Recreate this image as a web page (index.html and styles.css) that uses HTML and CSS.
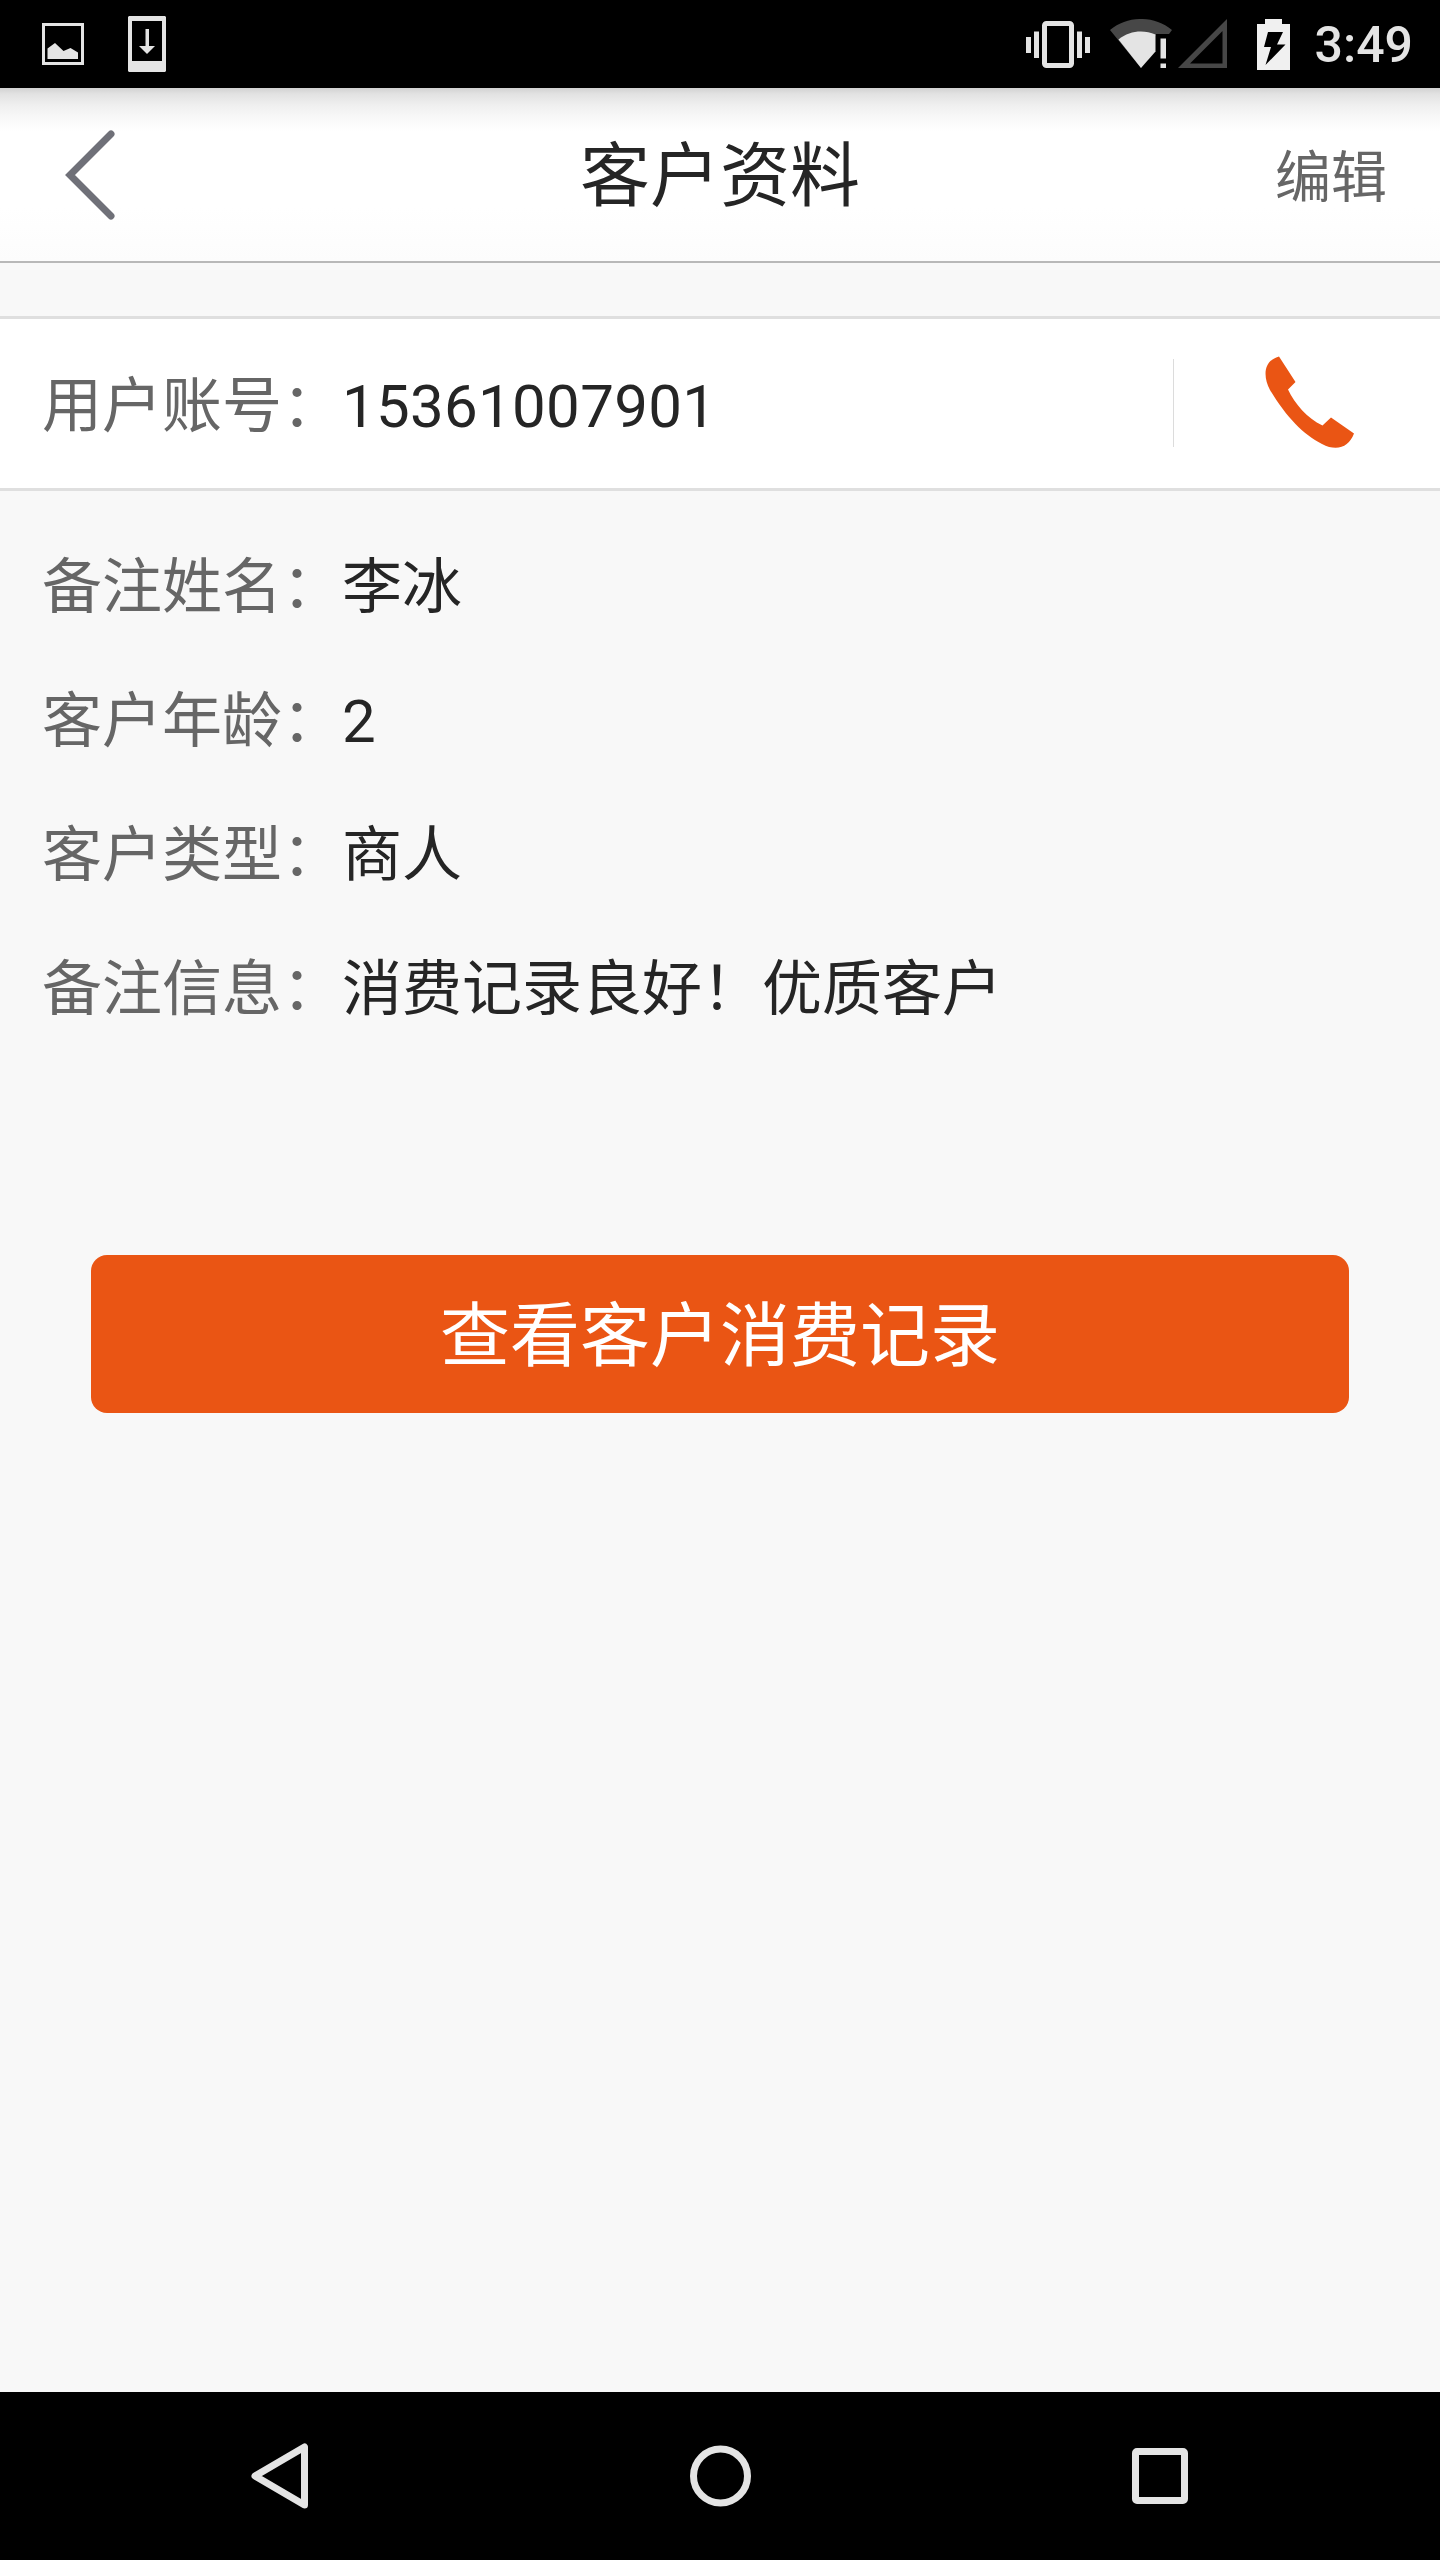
FILE: index.html
```html
<!DOCTYPE html>
<html lang="zh-CN">
<head>
    <meta charset="UTF-8">
    <meta name="viewport" content="width=device-width, initial-scale=1.0">
    <title>客户资料</title>
    <link rel="stylesheet" href="styles.css">
</head>
<body>
    <div class="status-bar">
        <div class="status-left">
            <svg width="42" height="42" viewBox="0 0 42 42">
                <path d="M1.5 1.5h39v39h-39z" fill="none" stroke="#e4e4e4" stroke-width="3"/>
                <path d="M5.500 36V25.500l7.500-5.500 8.500 8 7-3 7.500 4.500V36z" fill="#e4e4e4"/>
            </svg>
            <svg width="38" height="56" viewBox="0 0 38 56">
                <path fill-rule="evenodd" d="M1 0h36l1 1v54l-1 1H1l-1-1V1zM4 5v40h30V5z" fill="#e4e4e4"/>
                <path d="M17.500 13h3.500v17h6l-8 8-8-8h6.500z" fill="#e4e4e4"/>
            </svg>
        </div>
        <div class="status-right">
            <svg class="vibrate" width="64" height="48" viewBox="0 0 64 48">
                <rect x="18.500" y="2.500" width="27" height="42" rx="2" fill="none" stroke="#e4e4e4" stroke-width="5"/>
                <path d="M0 16h5v16H0zM8 10.500h5v26.500H8zM51 10.500h5v26.500h-5zM59 16h5v16h-5z" fill="#e4e4e4"/>
            </svg>
            <svg class="wifi" width="62" height="50" viewBox="0 0 62 50">
                <path d="M0 11C18-3.700 44-3.700 62 11l-3 4H46L31 49z" fill="#474747"/>
                <path d="M8.500 20.500c11-9 25-10 37-5v17L31 49z" fill="#e4e4e4"/>
                <path d="M50.500 19.500h5.500v20h-5.500zM50.500 44.500h5.500v4.500h-5.500z" fill="#e4e4e4"/>
            </svg>
            <svg class="signal" width="49" height="50" viewBox="0 0 49 50">
                <path fill-rule="evenodd" d="M49 0v49H0zM44.500 12L12 44.500h32.500z" fill="#474747"/>
            </svg>
            <svg class="battery" width="33" height="51" viewBox="0 0 33 51">
                <path d="M8 0h17v5h8v46H0V5h8z" fill="#f0f0f0"/>
                <path d="M11 13h15l-6 12.500h8.500L8.500 46l5.500-18H7z" fill="#000"/>
            </svg>
            <span class="time">3:49</span>
        </div>
    </div>

    <div class="header">
        <svg class="back" width="50" height="90" viewBox="0 0 50 90">
            <path d="M46 4L5 45l41 41" fill="none" stroke="#6f7078" stroke-width="7" stroke-linecap="round"/>
        </svg>
        <h1>客户资料</h1>
        <span class="edit">编辑</span>
    </div>

    <div class="main">
        <div class="account">
            <p><span class="label">用户账号：</span><span class="number">15361007901</span></p>
            <div class="call">
                <svg width="90" height="94" viewBox="0 0 90 94">
                    <path d="M14 .500L30.500 26 23 33.500C30 48 42 62 57.500 69.500L66 61.500 89 77.500C84 91 72 96 57 88 38 78 22 62 5 34-2 21-2 5 14 .500z" fill="#ea5514"/>
                </svg>
            </div>
        </div>

        <div class="info">
            <p><span class="label">备注姓名：</span>李冰</p>
            <p><span class="label">客户年龄：</span>2</p>
            <p><span class="label">客户类型：</span>商人</p>
            <p><span class="label">备注信息：</span>消费记录良好！优质客户</p>
        </div>

        <button type="button" class="record-btn">查看客户消费记录</button>
    </div>

    <div class="nav-bar">
        <svg width="58" height="66" viewBox="0 0 58 66">
            <path d="M53.500 4v58L4 33z" fill="none" stroke="#e4e4e4" stroke-width="7" stroke-linejoin="round"/>
        </svg>
        <svg width="62" height="62" viewBox="0 0 62 62">
            <circle cx="30.500" cy="31" r="27" fill="none" stroke="#e4e4e4" stroke-width="7"/>
        </svg>
        <svg width="56" height="56" viewBox="0 0 56 56">
            <rect x="3.500" y="3.500" width="49" height="49" rx="1.500" fill="none" stroke="#e4e4e4" stroke-width="7"/>
        </svg>
    </div>
</body>
</html>
```
FILE: styles.css
```css
* {
    box-sizing: border-box;
}
body {
    display: flex;
    flex-direction: column;
    height: 2560px;
    margin: 0;
    background-color: #f8f8f8;
    color: #252525;
    font-family: Roboto, "Noto Sans CJK SC", sans-serif;
}
h1, p {
    margin: 0;
    font-weight: normal;
}
svg {
    display: block;
    flex-shrink: 0;
}
.status-bar {
    display: flex;
    justify-content: space-between;
    height: 88px;
    padding: 0 27px 0 42px;
    background-color: #000;
}
.status-left, .status-right {
    display: flex;
    align-items: center;
}
.status-left {
    gap: 44px;
}
.vibrate {
    margin-top: 2px;
    margin-right: 20px;
}
.wifi {
    margin-right: 6px;
}
.signal {
    margin-right: 30px;
}
.battery {
    margin-right: 25px;
}
.time {
    padding-top: 3px;
    color: #e4e4e4;
    font-size: 50px;
    font-weight: 500;
    line-height: 87px;
}
.header {
    display: grid;
    grid-template-columns: 1fr auto 1fr;
    align-items: center;
    height: 175px;
    padding: 0 53px;
    border-bottom: 2px solid #b8b8b8;
    background: linear-gradient(#d2d2d2 0, #e2e2e2 6px, #efefef 17px, #f8f8f8 29px, #fff 43px, #fff 120px, #fcfcfc 100%);
}
.back {
    margin-left: 12px;
}
.header h1 {
    padding-top: 4px;
    font-size: 70px;
    line-height: 100px;
}
.edit {
    justify-self: end;
    padding-top: 6px;
    color: #666;
    font-size: 56px;
    line-height: 80px;
}
.main {
    flex: 1;
    padding-top: 53px;
}
.account {
    display: flex;
    align-items: center;
    justify-content: space-between;
    height: 175px;
    padding-left: 42px;
    border-top: 3px solid #dfdfdf;
    border-bottom: 3px solid #dfdfdf;
    background-color: #fff;
}
.account p, .info p {
    font-size: 60px;
    line-height: 134px;
}
.account p {
    padding-top: 7px;
}
.number {
    letter-spacing: 0.3px;
}
.label {
    color: #666;
}
.call {
    display: flex;
    align-items: center;
    width: 267px;
    height: 88px;
    margin-bottom: 2px;
    padding-left: 91px;
    border-left: 1px solid #dcdcdc;
}
.info {
    padding: 30px 42px 0;
}
.record-btn {
    display: block;
    width: 1258px;
    height: 158px;
    margin: 198px auto 0;
    padding: 0 0 8px;
    border: none;
    border-radius: 16px;
    background-color: #ea5514;
    color: #fff;
    font-family: inherit;
    font-size: 70px;
}
.nav-bar {
    display: flex;
    align-items: center;
    justify-content: space-between;
    height: 168px;
    padding: 0 252px 0 251px;
    background-color: #000;
}
```
